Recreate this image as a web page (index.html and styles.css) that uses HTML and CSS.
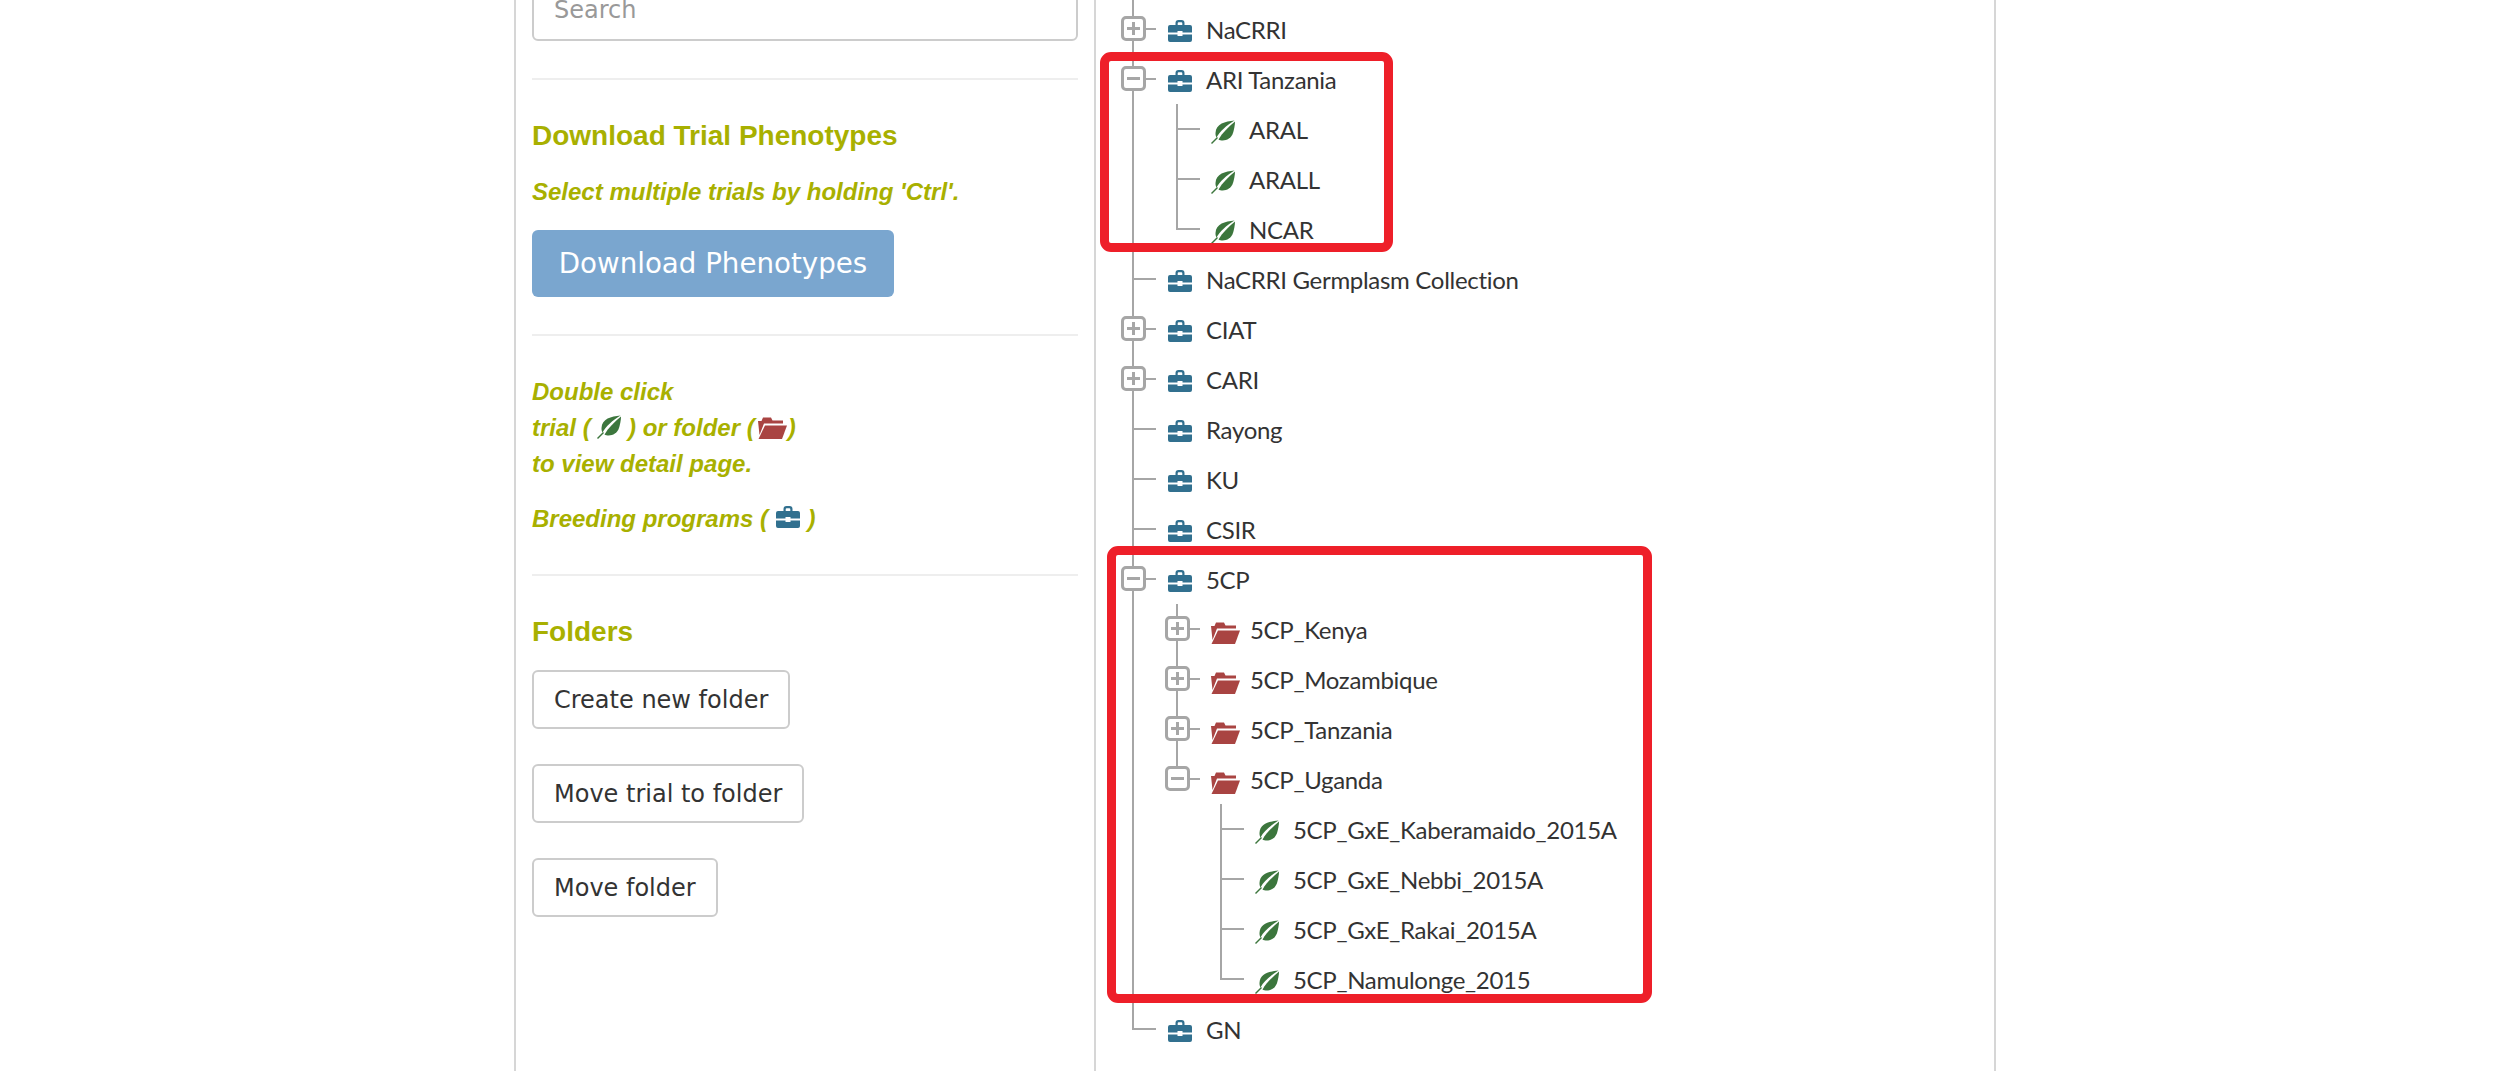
FILE: index.html
```html
<!DOCTYPE html>
<html lang="en">

<head>
    <meta charset="UTF-8">
    <meta name="viewport" content="width=device-width, initial-scale=1.0">
    <title>Manage Trials</title>
    <link rel="stylesheet" href="styles.css">
</head>

<body>
    <svg class="icon-defs" aria-hidden="true">
        <symbol id="i-case" viewBox="0 0 24 22">
            <path d="M7.5 5V3a3 3 0 0 1 3-3h3a3 3 0 0 1 3 3v2h-2.2V3.2a1 1 0 0 0-1-1h-2.6a1 1 0 0 0-1 1V5z"/>
            <path d="M2 5H22a2 2 0 0 1 2 2V12.5H14.500V11H9.500V12.5H0V7a2 2 0 0 1 2-2z"/>
            <path d="M0 14.500H9.500V16H14.500V14.500H24V20a2 2 0 0 1-2 2H2a2 2 0 0 1-2-2z"/>
        </symbol>
        <symbol id="i-leaf" viewBox="0 0 24 24">
            <path d="M23.500 .5C14 1.500 5 3.500 4.500 13C4.400 15 5 16.500 5.500 17.500C9 11 15 6 23.500 .5z"/>
            <path d="M7.500 19.500C11 21.500 20 21 22.300 12C23.300 8 24 5 24 1.500C17 7.500 11.500 12.500 7.500 19.500z"/>
            <path d="M0 23l6-6 1 1-6 6z"/>
        </symbol>
        <symbol id="i-folder" viewBox="0 0 29 22">
            <path d="M0 4H3.500L5 .5H13L14.500 3.500H25V6.500H6L1.500 18z"/>
            <path d="M7 8.500H29L24 22H.5z"/>
        </symbol>
    </svg>

    <div class="page">
        <aside class="sidebar">
            <input class="search" type="text" placeholder="Search">
            <hr>

            <h4>Download Trial Phenotypes</h4>
            <p class="hint">Select multiple trials by holding 'Ctrl'.</p>
            <button class="btn btn-primary" type="button">Download Phenotypes</button>
            <hr>

            <p class="hint help">Double click<br>
                trial ( <svg class="ic ic-leaf"><use href="#i-leaf"/></svg> ) or folder (<svg class="ic ic-folder"><use href="#i-folder"/></svg>)<br>
                to view detail page.</p>
            <p class="hint help-next">Breeding programs ( <svg class="ic ic-case"><use href="#i-case"/></svg> )</p>
            <hr>

            <h4>Folders</h4>
            <button class="btn" type="button">Create new folder</button>
            <button class="btn" type="button">Move trial to folder</button>
            <button class="btn" type="button">Move folder</button>
        </aside>

        <main class="tree-panel">
            <ul class="tree">
                <li><div class="row"><span class="knob plus"></span><svg class="ic ic-case"><use href="#i-case"/></svg><span class="name">NaCRRI</span></div></li>
                <li><div class="row"><span class="knob minus"></span><svg class="ic ic-case"><use href="#i-case"/></svg><span class="name">ARI Tanzania</span></div>
                    <ul>
                        <li><div class="row"><span class="knob"></span><svg class="ic ic-leaf"><use href="#i-leaf"/></svg><span class="name">ARAL</span></div></li>
                        <li><div class="row"><span class="knob"></span><svg class="ic ic-leaf"><use href="#i-leaf"/></svg><span class="name">ARALL</span></div></li>
                        <li><div class="row"><span class="knob"></span><svg class="ic ic-leaf"><use href="#i-leaf"/></svg><span class="name">NCAR</span></div></li>
                    </ul>
                </li>
                <li><div class="row"><span class="knob"></span><svg class="ic ic-case"><use href="#i-case"/></svg><span class="name">NaCRRI Germplasm Collection</span></div></li>
                <li><div class="row"><span class="knob plus"></span><svg class="ic ic-case"><use href="#i-case"/></svg><span class="name">CIAT</span></div></li>
                <li><div class="row"><span class="knob plus"></span><svg class="ic ic-case"><use href="#i-case"/></svg><span class="name">CARI</span></div></li>
                <li><div class="row"><span class="knob"></span><svg class="ic ic-case"><use href="#i-case"/></svg><span class="name">Rayong</span></div></li>
                <li><div class="row"><span class="knob"></span><svg class="ic ic-case"><use href="#i-case"/></svg><span class="name">KU</span></div></li>
                <li><div class="row"><span class="knob"></span><svg class="ic ic-case"><use href="#i-case"/></svg><span class="name">CSIR</span></div></li>
                <li><div class="row"><span class="knob minus"></span><svg class="ic ic-case"><use href="#i-case"/></svg><span class="name">5CP</span></div>
                    <ul>
                        <li><div class="row"><span class="knob plus"></span><svg class="ic ic-folder"><use href="#i-folder"/></svg><span class="name">5CP_Kenya</span></div></li>
                        <li><div class="row"><span class="knob plus"></span><svg class="ic ic-folder"><use href="#i-folder"/></svg><span class="name">5CP_Mozambique</span></div></li>
                        <li><div class="row"><span class="knob plus"></span><svg class="ic ic-folder"><use href="#i-folder"/></svg><span class="name">5CP_Tanzania</span></div></li>
                        <li><div class="row"><span class="knob minus"></span><svg class="ic ic-folder"><use href="#i-folder"/></svg><span class="name">5CP_Uganda</span></div>
                            <ul>
                                <li><div class="row"><span class="knob"></span><svg class="ic ic-leaf"><use href="#i-leaf"/></svg><span class="name">5CP_GxE_Kaberamaido_2015A</span></div></li>
                                <li><div class="row"><span class="knob"></span><svg class="ic ic-leaf"><use href="#i-leaf"/></svg><span class="name">5CP_GxE_Nebbi_2015A</span></div></li>
                                <li><div class="row"><span class="knob"></span><svg class="ic ic-leaf"><use href="#i-leaf"/></svg><span class="name">5CP_GxE_Rakai_2015A</span></div></li>
                                <li><div class="row"><span class="knob"></span><svg class="ic ic-leaf"><use href="#i-leaf"/></svg><span class="name">5CP_Namulonge_2015</span></div></li>
                            </ul>
                        </li>
                    </ul>
                </li>
                <li><div class="row"><span class="knob"></span><svg class="ic ic-case"><use href="#i-case"/></svg><span class="name">GN</span></div></li>
            </ul>
        </main>
    </div>

    <!-- red boxes drawn on top of the screenshot -->
    <div class="mark mark-one"></div>
    <div class="mark mark-two"></div>
</body>

</html>
```

FILE: styles.css
```css
html,
body {
    margin: 0;
    height: 1071px;
    overflow: hidden;
    background-color: #fff;
}

body {
    position: relative;
    font-family: "Liberation Sans", Arial, sans-serif;
    color: #333;
}

.icon-defs {
    position: absolute;
    width: 0;
    height: 0;
}

.page {
    display: flex;
    margin-left: 514px;
    width: 1482px;
    height: 1071px;
    border-left: 2px solid #d6d6d6;
    border-right: 2px solid #d6d6d6;
    box-sizing: border-box;
}

/* left column */
.sidebar {
    width: 578px;
    padding: 0 16px;
    margin-top: -27px;
    box-sizing: border-box;
    display: flex;
    flex-direction: column;
    align-items: flex-start;
}

.search {
    width: 100%;
    height: 68px;
    padding: 5px 20px 0;
    box-sizing: border-box;
    border: 2px solid #ccc;
    border-radius: 6px;
    font-family: "DejaVu Sans", sans-serif;
    font-size: 24px;
    color: #333;
}

.search::placeholder {
    color: #999;
}

hr {
    width: 100%;
    height: 2px;
    margin: 37px 0 0;
    border: 0;
    background-color: #eee;
}

h4 {
    margin: 36px 0 0;
    font-size: 28px;
    line-height: 40px;
    font-weight: bold;
    color: #a8b000;
}

.hint {
    margin: 18px 0 0;
    font-size: 24px;
    line-height: 36px;
    font-weight: bold;
    font-style: italic;
    color: #a8b000;
}

.hint .ic-folder {
    margin: 0 1px 0 3px;
}

.help {
    margin-top: 38px;
}

.help-next {
    margin-top: 19px;
}

.help-next + hr {
    margin-top: 37px;
}

.btn {
    height: 59px;
    margin-top: 35px;
    padding: 0 20px;
    box-sizing: border-box;
    border: 2px solid #ccc;
    border-radius: 6px;
    background-color: #fff;
    font-family: "DejaVu Sans", sans-serif;
    font-size: 24px;
    color: #333;
}

h4 + .btn {
    margin-top: 18px;
}

.btn-primary {
    width: 362px;
    height: 67px;
    margin-top: 20px;
    padding: 0;
    border: 0;
    background-color: #7aa6cf;
    font-size: 27.7px;
    color: #fff;
}

.ic {
    flex: none;
    vertical-align: -3px;
}

.ic-case {
    width: 26px;
    height: 22px;
    fill: #31708f;
    vertical-align: -1px;
}

.ic-leaf {
    width: 24px;
    height: 24px;
    fill: #3c763d;
}

.ic-folder {
    width: 29px;
    height: 22px;
    fill: #a94442;
}

/* tree */
.tree-panel {
    flex: 1;
    border-left: 2px solid #d6d6d6;
    padding: 4px 0 0 15px;
    overflow: hidden;
}

.tree,
.tree ul {
    list-style: none;
    margin: 0;
    padding: 0;
}

.tree ul {
    padding-left: 44px;
}

.tree li {
    position: relative;
}

/* vertical line of a level */
.tree li::before {
    content: "";
    position: absolute;
    left: 21px;
    top: 0;
    bottom: 0;
    width: 2px;
    background-color: #a6a6a6;
}

.tree li:last-child::before {
    bottom: auto;
    height: 26px;
}

.tree > li:first-child::before {
    top: -4px;
}

.row {
    position: relative;
    display: flex;
    align-items: center;
    height: 50px;
}

.knob {
    position: relative;
    flex: none;
    width: 45px;
    height: 2px;
    margin-right: 11px;
    background: linear-gradient(#a6a6a6, #a6a6a6) no-repeat 21px 0 / 24px 2px;
}

.knob.plus::before,
.knob.minus::before {
    content: "";
    position: absolute;
    left: 10px;
    top: -12px;
    width: 25px;
    height: 25px;
    box-sizing: border-box;
    border: 3px solid #a6a6a6;
    border-radius: 5px;
    background: linear-gradient(#a6a6a6, #a6a6a6) no-repeat center / 13px 3px, #fff;
}

.knob.plus::before {
    background: linear-gradient(#a6a6a6, #a6a6a6) no-repeat center / 13px 3px,
        linear-gradient(#a6a6a6, #a6a6a6) no-repeat center / 3px 13px, #fff;
}

.row .ic {
    margin-right: 13px;
}

/* glyphs sit a little under the text centre */
.row .ic-case {
    margin-top: 4px;
}

.row .ic-folder {
    margin-top: 7px;
    margin-right: 10px;
}

.row .ic-leaf {
    margin-top: 5px;
    margin-right: 14px;
}

.name {
    font-family: Lato, sans-serif;
    font-size: 24px;
    letter-spacing: -0.3px;
    color: #333;
    white-space: nowrap;
}

/* annotation boxes */
.mark {
    position: absolute;
    box-sizing: border-box;
    border: 9px solid #ee1f29;
    border-radius: 11px;
}

.mark-one {
    left: 1100px;
    top: 52px;
    width: 293px;
    height: 200px;
}

.mark-two {
    left: 1107px;
    top: 546px;
    width: 545px;
    height: 457px;
}
```
